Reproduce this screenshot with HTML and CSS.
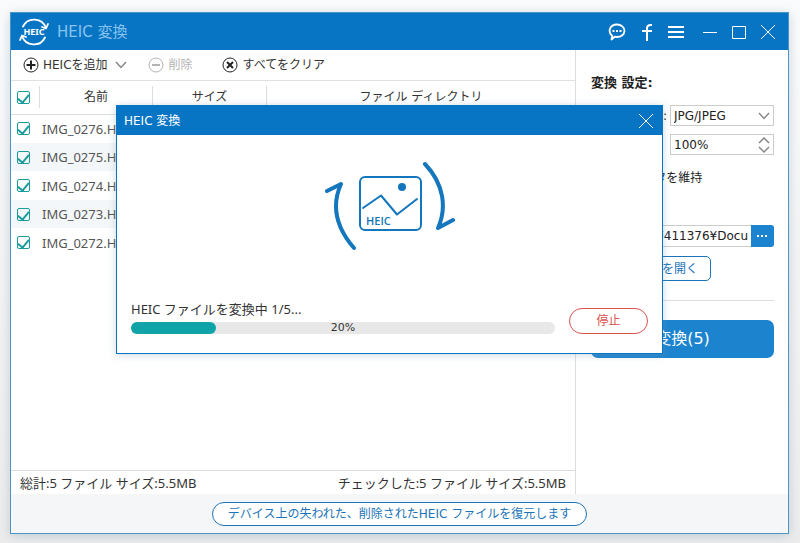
FILE: index.html
```html
<!DOCTYPE html>
<html lang="ja">
<head>
    <meta charset="UTF-8">
    <meta name="viewport" content="width=device-width, initial-scale=1.0">
    <title>HEIC 変換</title>
    <link rel="stylesheet" href="styles.css">
</head>
<body>
    <div class="window">
        <header class="titlebar">
            <svg class="logo" width="30" height="30" viewBox="0 0 30 30" fill="none" stroke="#fff" stroke-width="1.800" stroke-linecap="round" stroke-linejoin="round">
                <path d="M4 9.500A12.500 12.500 0 0 1 27 11M29 7l-2 4.500-4-1.500"/>
                <path d="M26 20.500A12.500 12.500 0 0 1 3 19M1 23l2-4.500 4 1.500"/>
                <text x="15" y="18" text-anchor="middle" fill="#fff" stroke="none">HEIC</text>
            </svg>
            <h1>HEIC 変換</h1>
            <div class="tools">
                <button type="button" aria-label="フィードバック">
                    <svg width="18" height="18" viewBox="0 0 18 18" fill="none" stroke="#fff" stroke-width="1.800">
                        <path d="M4.200 13C-.5 9 1.500 1.500 9 1.500c4.300 0 7.500 2.800 7.500 6.300S13.300 14 9 14c-.8 0-1.500 0-2.200-.3L3.500 16.500z" stroke-linejoin="round"/>
                        <path d="M4.500 8h2M8 8h2M11.500 8h2"/>
                    </svg>
                </button>
                <button type="button" aria-label="Facebook">
                    <svg width="12" height="18" viewBox="0 0 12 18" fill="none" stroke="#fff" stroke-width="2">
                        <path d="M11 2H9.500Q6 2 6 5.500V18M1 8h10"/>
                    </svg>
                </button>
                <button type="button" aria-label="メニュー">
                    <svg width="16" height="14" viewBox="0 0 16 14" stroke="#fff" stroke-width="2">
                        <path d="M0 2h16M0 7h16M0 12h16"/>
                    </svg>
                </button>
                <button type="button" class="first" aria-label="最小化">
                    <svg width="14" height="14" viewBox="0 0 14 14" stroke="#fff"><path d="M0 7.500h14"/></svg>
                </button>
                <button type="button" aria-label="最大化">
                    <svg width="14" height="14" viewBox="0 0 14 14" fill="none" stroke="#fff"><path d="M.5 1.500h13v12H.5z"/></svg>
                </button>
                <button type="button" aria-label="閉じる">
                    <svg width="14" height="14" viewBox="0 0 14 14" stroke="#fff"><path d="M0 0l14 14M14 0L0 14"/></svg>
                </button>
            </div>
        </header>

        <div class="main">
            <section class="files">
                <div class="toolbar">
                    <button type="button" class="add">
                        <svg width="16" height="16" viewBox="0 0 16 16" fill="none" stroke="#222"><circle cx="8" cy="8" r="7"/><path d="M8 3.500v9M3.500 8h9" stroke-width="2"/></svg>
                        HEICを追加
                        <svg width="12" height="8" viewBox="0 0 12 8" fill="none" stroke="#888" stroke-width="1.500"><path d="M1 1l5 5.500L11 1"/></svg>
                    </button>
                    <button type="button" class="remove" disabled>
                        <svg width="16" height="16" viewBox="0 0 16 16" fill="none" stroke="#b4b4b4"><circle cx="8" cy="8" r="7"/><path d="M4 8h8" stroke-width="2"/></svg>
                        削除
                    </button>
                    <button type="button">
                        <svg width="16" height="16" viewBox="0 0 16 16" fill="none" stroke="#222"><circle cx="8" cy="8" r="7"/><path d="M5 5l6 6M11 5l-6 6" stroke-width="2"/></svg>
                        すべてをクリア
                    </button>
                </div>
                <table>
                    <thead>
                        <tr>
                            <th class="check"><input type="checkbox" aria-label="すべて選択" checked></th>
                            <th class="col"><span>名前</span></th>
                            <th class="col"><span>サイズ</span></th>
                            <th><span>ファイル ディレクトリ</span></th>
                        </tr>
                    </thead>
                    <tbody>
                        <tr><td class="check"><input type="checkbox" aria-label="IMG_0276" checked></td><td>IMG_0276.HEIC</td><td></td><td></td></tr>
                        <tr><td class="check"><input type="checkbox" aria-label="IMG_0275" checked></td><td>IMG_0275.HEIC</td><td></td><td></td></tr>
                        <tr><td class="check"><input type="checkbox" aria-label="IMG_0274" checked></td><td>IMG_0274.HEIC</td><td></td><td></td></tr>
                        <tr><td class="check"><input type="checkbox" aria-label="IMG_0273" checked></td><td>IMG_0273.HEIC</td><td></td><td></td></tr>
                        <tr><td class="check"><input type="checkbox" aria-label="IMG_0272" checked></td><td>IMG_0272.HEIC</td><td></td><td></td></tr>
                    </tbody>
                </table>
                <div class="status">
                    <span>総計:5 ファイル サイズ:5.5MB</span>
                    <span>チェックした:5 ファイル サイズ:5.5MB</span>
                </div>
            </section>

            <aside class="settings">
                <h2>変換 設定:</h2>
                <div class="field">
                    <label for="format">形式:</label>
                    <div class="box">
                        <select id="format"><option>JPG/JPEG</option></select>
                        <svg width="12" height="8" viewBox="0 0 12 8" fill="none" stroke="#888" stroke-width="1.500"><path d="M1 1l5 5.500L11 1"/></svg>
                    </div>
                </div>
                <div class="field">
                    <label for="quality">画質</label>
                    <div class="box">
                        <input type="text" id="quality" value="100%">
                        <svg width="12" height="16" viewBox="0 0 12 16" fill="none" stroke="#888" stroke-width="1.500"><path d="M1 6l5-5 5 5M1 10l5 5 5-5"/></svg>
                    </div>
                </div>
                <label class="exif"><input type="checkbox" checked>Exifデータを維持</label>
                <div class="path">
                    <input type="text" aria-label="出力先" value="C:¥Users¥411376¥Docu">
                    <button type="button" aria-label="参照">
                        <svg width="12" height="4" viewBox="0 0 12 4" fill="#fff"><path d="M0 1h2v2H0zM4 1h2v2H4zM8 1h2v2H8z"/></svg>
                    </button>
                </div>
                <button type="button" class="open">フォルダを開く</button>
                <hr>
                <button type="button" class="convert">変換(5)</button>
            </aside>
        </div>

        <footer class="footer">
            <a href="#">デバイス上の失われた、削除されたHEIC ファイルを復元します</a>
        </footer>

        <div class="dialog" role="dialog" aria-labelledby="dialog-title">
            <div class="dialog-head">
                <h2 id="dialog-title">HEIC 変換</h2>
                <button type="button" aria-label="閉じる">
                    <svg width="14" height="14" viewBox="0 0 14 14" stroke="#fff"><path d="M0 0l14 14M14 0L0 14"/></svg>
                </button>
            </div>
            <svg class="picture" width="130" height="90" viewBox="325 161 130 90" fill="none" stroke="#1476bd" stroke-width="4" stroke-linecap="round" stroke-linejoin="round">
                <path d="M354 248C335 226 332 204 341 184L327 191"/>
                <path d="M425 164C444 184 447 208 438 228L453 220"/>
                <rect x="360" y="177" width="61" height="53" rx="5" stroke-width="2"/>
                <path d="M363 208l18-12.500 16 19 20-15.500" stroke-width="2"/>
                <circle cx="402" cy="187" r="4" fill="#1476bd" stroke="none"/>
                <text x="366" y="225" fill="#1476bd" stroke="none">HEIC</text>
            </svg>
            <div class="job">
                <div class="progress">
                    <p>HEIC ファイルを変換中 1/5...</p>
                    <div class="bar" role="progressbar" aria-valuenow="20" aria-valuemin="0" aria-valuemax="100">
                        <div class="fill" style="width: 20%"></div>
                        <span>20%</span>
                    </div>
                </div>
                <button type="button" class="stop">停止</button>
            </div>
        </div>
    </div>
</body>
</html>
```
FILE: styles.css
```css
*{
    margin: 0;
    padding: 0;
    box-sizing: border-box;
}
html, body{
    height: 100%;
}
body{
    padding: 12px 11px 9px 10px;
    background: linear-gradient(#fafbfc, #ececec);
    font: 12px/16px "DejaVu Sans", "Noto Sans CJK JP", sans-serif;
    color: #333;
}
button, input, select{
    font: inherit;
    color: inherit;
    border: 0;
    background: none;
}
svg{
    display: block;
    flex: none;
}
.window{
    position: relative;
    display: flex;
    flex-direction: column;
    min-height: 100%;
    border: 1px solid #4c94c3;
    background: #fff;
    box-shadow: 0 2px 10px #7a9ab060;
}

/* 标题栏 */
.titlebar{
    display: flex;
    align-items: center;
    height: 37px;
    padding: 0 13px 0 8px;
    background: #0875c4;
}
.logo text{
    font: bold 9px "Noto Sans", sans-serif;
}
.titlebar h1{
    margin-left: 8px;
    font-size: 15px;
    font-weight: normal;
    color: #86c4f0;
}
.tools{
    display: flex;
    align-items: center;
    gap: 15px;
    margin-left: auto;
}
.tools .first{
    margin-left: 4px;
}

/* 左边文件列表 */
.main{
    flex: 1;
    display: flex;
}
.files{
    flex: 1;
    display: flex;
    flex-direction: column;
    border-right: 1px solid #ddd;
}
.toolbar{
    display: flex;
    align-items: center;
    gap: 21px;
    height: 31px;
    padding-left: 12px;
    border-bottom: 1px solid #e0e0e0;
}
.toolbar button{
    display: flex;
    align-items: center;
    gap: 5px;
}
.toolbar .add{
    gap: 4px;
}
.toolbar .add svg:last-child{
    margin-left: 3px;
}
.toolbar .remove{
    margin-right: 8px;
    color: #b4b4b4;
}
table{
    width: 100%;
    table-layout: fixed;
    border-collapse: collapse;
}
th{
    height: 33px;
    border-bottom: 1px solid #ddd;
    font-weight: normal;
}
th span{
    display: block;
    line-height: 22px;
}
.col{
    width: 114px;
}
.col span{
    border-right: 1px solid #ddd;
}
.check{
    width: 28px;
}
th.check + th span{
    border-left: 1px solid #ddd;
}
td{
    height: 28px;
    color: #555;
}
td + td{
    padding-left: 3px;
}
td, .status, .progress p{
    font-family: "Noto Sans", "Noto Sans CJK JP", sans-serif;
    font-size: 13px;
}
tbody tr:nth-child(odd) td{
    height: 29px;
}
tbody tr:nth-child(even){
    background: #f4f7fa;
}
input[type="checkbox"]{
    appearance: none;
    display: flex;
    justify-content: center;
    width: 13px;
    height: 13px;
    border: 1px solid #1a9b9c;
    border-radius: 2px;
}
.check input{
    margin-left: 6px;
}
input[type="checkbox"]:checked::after{
    content: "";
    width: 5px;
    height: 9px;
    border: solid #1a9b9c;
    border-width: 0 2px 2px 0;
    transform: rotate(40deg);
}
.status{
    display: flex;
    justify-content: space-between;
    align-items: center;
    height: 24px;
    margin-top: auto;
    padding: 0 9px;
    border-top: 1px solid #ddd;
}

/* 右边设置 */
.settings{
    display: flex;
    flex-direction: column;
    width: 212px;
    padding: 24px 14px 0 15px;
    color: #222;
}
.settings h2{
    margin-bottom: 13px;
    font-size: 13px;
    line-height: 18px;
}
.field{
    display: flex;
    align-items: center;
    justify-content: flex-end;
    gap: 3px;
    margin-bottom: 8px;
}
.field label{
    min-width: 64px;
    text-align: right;
}
.field + .field label{
    text-align: left;
}
.box{
    display: flex;
    align-items: center;
    width: 104px;
    height: 21px;
    padding: 0 3px;
    border: 1px solid #ccc;
}
.box input, .box select{
    flex: 1;
    min-width: 0;
    appearance: none;
}
.exif{
    display: flex;
    align-items: center;
    gap: 4px;
    margin: 7px 0 39px;
}
.path{
    display: flex;
    height: 22px;
    margin-bottom: 9px;
}
.path input{
    flex: 1;
    min-width: 0;
    padding-right: 3px;
    border: 1px solid #ccc;
    border-right: 0;
    text-align: right;
}
.path button{
    display: flex;
    align-items: center;
    justify-content: center;
    width: 23px;
    border-radius: 0 3px 3px 0;
    background: #1c84cf;
}
.open{
    width: 120px;
    height: 25px;
    padding-right: 12px;
    border: 1px solid #1c74b8;
    border-radius: 5px;
    text-align: right;
    color: #1c74b8;
}
hr{
    margin: 19px 0;
    border: 0;
    border-top: 1px solid #ddd;
}
.convert{
    height: 38px;
    border-radius: 7px;
    background: #1c84cf;
    font-size: 16px;
    color: #fff;
}

.footer{
    display: flex;
    align-items: center;
    justify-content: center;
    height: 39px;
    background: #f5f6f7;
}
.footer a{
    padding: 1px 15px;
    border: 1px solid #1c74b8;
    border-radius: 12px;
    background: #fff;
    line-height: 20px;
    color: #1c74b8;
    text-decoration: none;
}

/* 进度弹窗 */
.dialog{
    position: absolute;
    top: 92px;
    left: 105px;
    right: 125px;
    border: 1px solid #0875c4;
    background: #fff;
    box-shadow: 0 1px 8px #7a9ab060;
}
.dialog-head{
    display: flex;
    align-items: center;
    justify-content: space-between;
    height: 29px;
    padding: 0 9px 0 7px;
    background: #0875c4;
    color: #fff;
}
.dialog-head h2{
    font-size: 12px;
    font-weight: normal;
}
.picture{
    margin: 26px auto 0;
}
.picture text{
    font: 600 11px "Open Sans", sans-serif;
}
.job{
    display: flex;
    align-items: flex-end;
    gap: 14px;
    padding: 49px 14px 19px;
}
.progress{
    flex: 1;
}
.progress p{
    margin-bottom: 4px;
    line-height: 18px;
}
.bar{
    display: grid;
    height: 12px;
    border-radius: 6px;
    background: #e8e8e8;
}
.bar .fill, .bar span{
    grid-area: 1 / 1;
}
.bar .fill{
    border-radius: 6px;
    background: #10a3a8;
}
.bar span{
    font-size: 11px;
    line-height: 12px;
    text-align: center;
}
.stop{
    width: 79px;
    height: 26px;
    border: 1px solid #d9534f;
    border-radius: 13px;
    color: #d9534f;
}
```
